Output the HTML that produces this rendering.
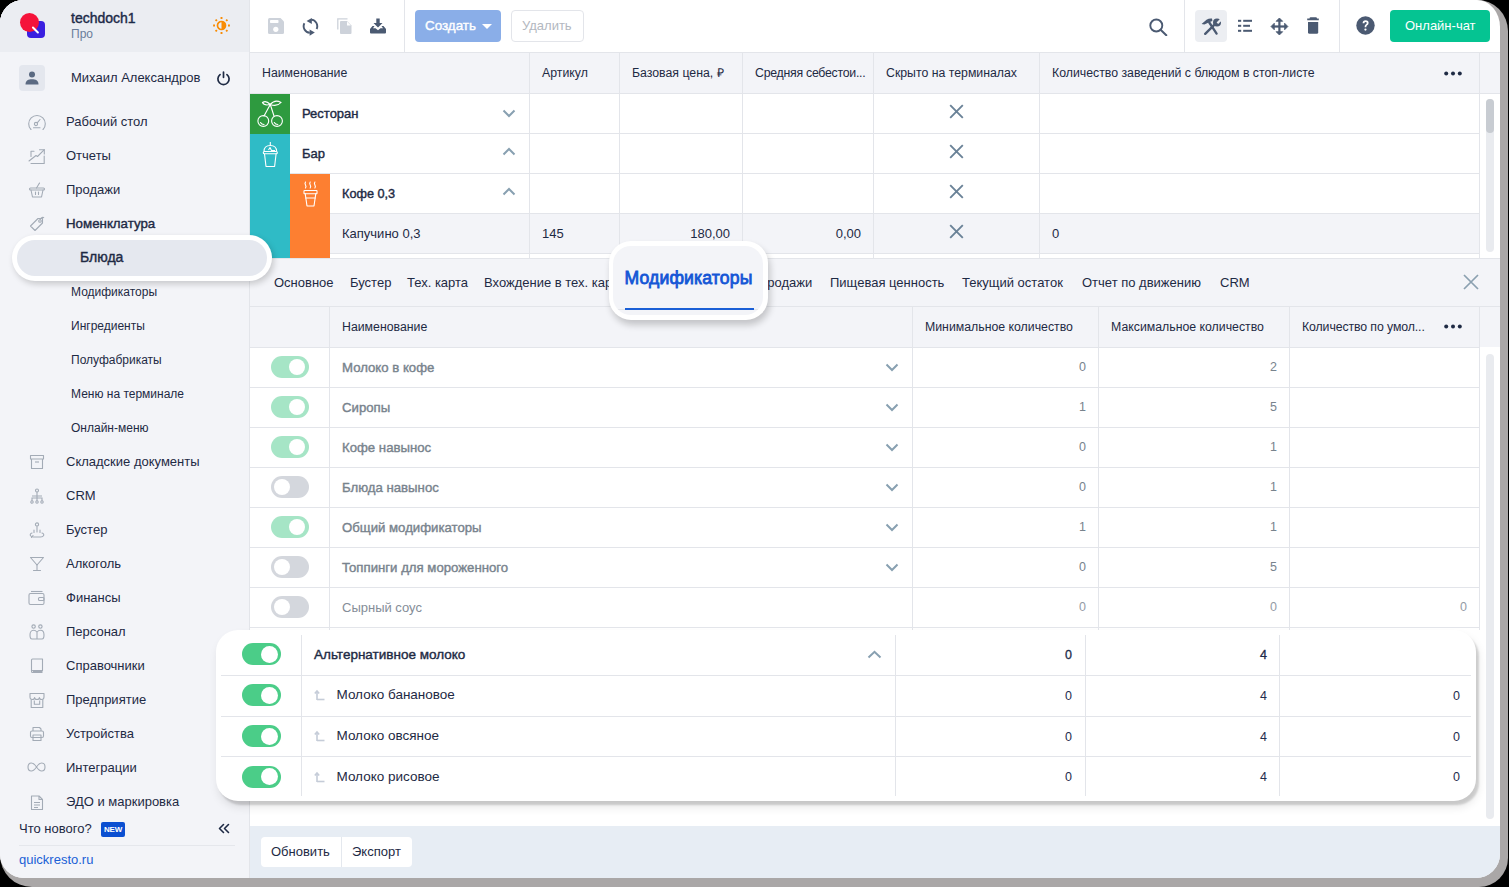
<!DOCTYPE html>
<html><head><meta charset="utf-8">
<style>
*{box-sizing:border-box;margin:0;padding:0}
html,body{width:1509px;height:887px;overflow:hidden;background:#000;font-family:"Liberation Sans",sans-serif;color:#1e2a44}
.abs{position:absolute}
.shadow{position:absolute;left:0;top:0;width:1508px;height:887px;border-radius:24px 31px 29px 32px;background:#aaa7a7}
.app{position:absolute;left:0;top:0;width:1500px;height:878px;border-radius:23px 23px 24px 24px / 23px 27px 24px 24px;overflow:hidden;background:#fff}
.sb{position:absolute;left:0;top:0;width:249px;height:878px;background:#f3f4f8}
.sbh{position:absolute;left:0;top:0;width:249px;height:52px;background:#ebedf2}
.vl{position:absolute;width:1px;background:#e3e5ea}
.hl{position:absolute;height:1px;background:#e3e5ea}
.t{position:absolute;white-space:nowrap;line-height:16px;font-size:13px}
.si{position:absolute;left:0;width:249px;height:34px;display:flex;align-items:center;font-size:13px;white-space:nowrap;color:#1e2a44}
.si svg{position:absolute;left:28px;top:9px}
.si span{position:absolute;left:66px;top:9px;line-height:16px}
.sub span{left:71px}
.m{-webkit-text-stroke-width:0.4px}
</style></head><body>
<div class="shadow"></div>
<div class="app">
  <!-- SIDEBAR -->
  <div class="sb"></div>
  <div class="sbh"></div>
  <div class="vl" style="left:249px;top:0;height:878px"></div>
  <!-- logo -->
  <div class="abs" style="left:27px;top:21px;width:18px;height:17px;border-radius:4px;background:#3a1fe0"></div>
  <div class="abs" style="left:20px;top:13px;width:19px;height:19px;border-radius:50%;background:#f5133a"></div>
  <div class="abs" style="left:30.5px;top:29px;width:9px;height:1.8px;background:#fff;transform:rotate(45deg);border-radius:1px"></div>
  <div class="t m" style="left:71px;top:10px;font-size:14px;color:#1c2a48">techdoch1</div>
  <div class="t" style="left:71px;top:26px;font-size:12px;color:#6a7d9a">Про</div>
  <!-- sun -->
  <svg class="abs" style="left:211.5px;top:16.3px" width="19" height="19" viewBox="0 0 19 19"><g stroke="#f88c05" stroke-width="1.9"><line x1="16.00" y1="9.50" x2="17.90" y2="9.50"/><line x1="14.10" y1="14.10" x2="15.44" y2="15.44"/><line x1="9.50" y1="16.00" x2="9.50" y2="17.90"/><line x1="4.90" y1="14.10" x2="3.56" y2="15.44"/><line x1="3.00" y1="9.50" x2="1.10" y2="9.50"/><line x1="4.90" y1="4.90" x2="3.56" y2="3.56"/><line x1="9.50" y1="3.00" x2="9.50" y2="1.10"/><line x1="14.10" y1="4.90" x2="15.44" y2="3.56"/></g><circle cx="9.5" cy="9.5" r="4.0" fill="none" stroke="#f88c05" stroke-width="1.7"/><path d="M9.5 5.5 A4 4 0 0 1 9.5 13.5 Z" fill="#f88c05"/></svg>
  <!-- user -->
  <div class="abs" style="left:19px;top:65px;width:26px;height:26px;border-radius:4px;background:#e4e7ee"></div>
  <svg class="abs" style="left:25px;top:71px" width="14" height="14" viewBox="0 0 14 14">
    <circle cx="7" cy="3.6" r="3" fill="#5b6a82"/>
    <path d="M0.5 13.5 C0.5 9.5 3.5 8.3 7 8.3 C10.5 8.3 13.5 9.5 13.5 13.5 Z" fill="#5b6a82"/>
  </svg>
  <div class="t" style="left:71px;top:70px">Михаил Александров</div>
  <svg class="abs" style="left:216px;top:70.5px" width="15" height="15" viewBox="0 0 15 15"><path d="M10.95 3.59 A5.6 5.6 0 1 1 4.05 3.59" fill="none" stroke="#1e2a44" stroke-width="1.7" stroke-linecap="round"/><line x1="7.5" y1="1" x2="7.5" y2="6.3" stroke="#1e2a44" stroke-width="1.7" stroke-linecap="round"/></svg>
  <div class="t" style="left:66px;top:114px">Рабочий стол</div>
  <svg class="abs" style="left:27px;top:114px" width="20" height="17" viewBox="0 0 20 17"><g fill="none" stroke="#a3abb6" stroke-width="1.1" stroke-linecap="round"><path d="M4 15.5 A8.3 8.3 0 1 1 16 15.5"/><circle cx="9" cy="10" r="1.6"/><line x1="10.2" y1="8.8" x2="13" y2="5.5"/><line x1="6.5" y1="13.8" x2="13" y2="13.8"/></g></svg>
  <div class="t" style="left:66px;top:148px">Отчеты</div>
  <svg class="abs" style="left:28px;top:148px" width="18" height="17" viewBox="0 0 18 17"><g fill="none" stroke="#a3abb6" stroke-width="1.1" stroke-linecap="round" stroke-linejoin="round"><path d="M3 8.5 V3.3 H6"/><path d="M3 15.5 H16.2 V8"/><path d="M1 13 L8 7.5 L9.5 8.5 L16.3 1.7"/><path d="M11.5 1.7 H16.3 V6"/></g></svg>
  <div class="t" style="left:66px;top:182px">Продажи</div>
  <svg class="abs" style="left:28px;top:182px" width="18" height="17" viewBox="0 0 18 17"><g fill="none" stroke="#a3abb6" stroke-width="1.1" stroke-linecap="round" stroke-linejoin="round"><rect x="1.5" y="6" width="15" height="2" rx="1"/><path d="M3 8 L4.5 15 H13.5 L15 8"/><path d="M7.5 10 V12.5 M10.5 10 V12.5"/><path d="M8.5 6 L11.5 1"/></g></svg>
  <div class="t m" style="left:66px;top:216px;font-size:13.3px">Номенклатура</div>
  <svg class="abs" style="left:29px;top:216px" width="16" height="16" viewBox="0 0 16 16"><g fill="none" stroke="#a3abb6" stroke-width="1.1" stroke-linejoin="round"><path d="M1.5 10 L9 2.5 H13.5 V7 L6 14.5 Z"/><circle cx="11" cy="5" r="1.3"/><path d="M11 3.7 C12 1.5 14 0.8 15 2"/></g></svg>
  <div class="t" style="left:71px;top:284px;font-size:12px">Модификаторы</div>
  <div class="t" style="left:71px;top:318px;font-size:12px">Ингредиенты</div>
  <div class="t" style="left:71px;top:352px;font-size:12px">Полуфабрикаты</div>
  <div class="t" style="left:71px;top:386px;font-size:12px">Меню на терминале</div>
  <div class="t" style="left:71px;top:420px;font-size:12px">Онлайн-меню</div>
  <div class="t" style="left:66px;top:454px">Складские документы</div>
  <svg class="abs" style="left:29px;top:454px" width="16" height="16" viewBox="0 0 16 16"><g fill="none" stroke="#a3abb6" stroke-width="1.1" stroke-linejoin="round"><rect x="1.5" y="1.5" width="13" height="3.5"/><path d="M2.5 5 V14.5 H13.5 V5"/><path d="M6 8 H10"/></g></svg>
  <div class="t" style="left:66px;top:488px">CRM</div>
  <svg class="abs" style="left:29px;top:488px" width="16" height="16" viewBox="0 0 16 16"><g fill="none" stroke="#a3abb6" stroke-width="1.1"><circle cx="8" cy="2.5" r="1.5"/><path d="M8 4 V8 M3 13 V10 H13 V13 M8 8 V13 M3 8 H13"/><circle cx="3" cy="14" r="1.2"/><circle cx="8" cy="14" r="1.2"/><circle cx="13" cy="14" r="1.2"/></g></svg>
  <div class="t" style="left:66px;top:522px">Бустер</div>
  <svg class="abs" style="left:29px;top:522px" width="16" height="17" viewBox="0 0 16 17"><g fill="none" stroke="#a3abb6" stroke-width="1.1" stroke-linecap="round"><circle cx="8" cy="2.5" r="1.6"/><path d="M8 5 V10 M5 8 V10.5 M11 8 V10.5"/><path d="M3 11 C0 12 1 15 4.5 15 H11.5 C15 15 16 12 13 11"/><path d="M4 13.5 L2.5 15.5"/></g></svg>
  <div class="t" style="left:66px;top:556px">Алкоголь</div>
  <svg class="abs" style="left:29px;top:556px" width="16" height="16" viewBox="0 0 16 16"><g fill="none" stroke="#a3abb6" stroke-width="1.1" stroke-linecap="round" stroke-linejoin="round"><path d="M1.5 1.5 H14.5 L8 9 Z"/><path d="M8 9 V14.5 M4.5 14.5 H11.5"/></g></svg>
  <div class="t" style="left:66px;top:590px">Финансы</div>
  <svg class="abs" style="left:28px;top:590px" width="17" height="16" viewBox="0 0 17 16"><g fill="none" stroke="#a3abb6" stroke-width="1.1" stroke-linejoin="round"><path d="M3 1.5 H14.5"/><rect x="1" y="3.5" width="15" height="11" rx="1.5"/><rect x="10.5" y="7.5" width="5.5" height="3" rx="1"/></g></svg>
  <div class="t" style="left:66px;top:624px">Персонал</div>
  <svg class="abs" style="left:29px;top:624px" width="16" height="16" viewBox="0 0 16 16"><g fill="none" stroke="#a3abb6" stroke-width="1.1"><circle cx="4.6" cy="2.6" r="1.7"/><circle cx="11.4" cy="2.6" r="1.7"/><path d="M7.8 8 C7 6.8 6 6.3 4.5 6.3 C2 6.3 1 8.5 1 11 C1 13 1.6 15 3 15 H13 C14.4 15 15 13 15 11 C15 8.5 14 6.3 11.5 6.3 C10 6.3 9 6.8 8.2 8"/><path d="M8 8 V15"/></g></svg>
  <div class="t" style="left:66px;top:658px">Справочники</div>
  <svg class="abs" style="left:30px;top:658px" width="14" height="16" viewBox="0 0 14 16"><g fill="none" stroke="#a3abb6" stroke-width="1.1" stroke-linejoin="round"><path d="M1.5 13 V2 Q1.5 1 2.5 1 H12.5 V12.5 H2.5 Q1.5 12.5 1.5 13.5 Q1.5 14.5 2.5 14.5 H12.5"/><path d="M3 13.5 H12.5"/></g></svg>
  <div class="t" style="left:66px;top:692px">Предприятие</div>
  <svg class="abs" style="left:29px;top:692px" width="16" height="17" viewBox="0 0 16 17"><g fill="none" stroke="#a3abb6" stroke-width="1.1" stroke-linejoin="round"><path d="M1 1.5 H15 V5 Q15 7.5 12.7 7.5 Q10.4 7.5 10.4 5.5 Q10.4 7.5 8 7.5 Q5.6 7.5 5.6 5.5 Q5.6 7.5 3.3 7.5 Q1 7.5 1 5 Z"/><path d="M2.2 7.5 V15.5 H13.8 V7.5"/><path d="M5.3 8.5 V12.3 H10.7 V8.5"/></g></svg>
  <div class="t" style="left:66px;top:726px">Устройства</div>
  <svg class="abs" style="left:29px;top:726px" width="16" height="16" viewBox="0 0 16 16"><g fill="none" stroke="#a3abb6" stroke-width="1.1" stroke-linejoin="round"><path d="M4 5 V1.5 H10.5 L12 3 V5"/><rect x="1.5" y="5" width="13" height="6.5" rx="1.5"/><rect x="4" y="9" width="8" height="5.5"/></g></svg>
  <div class="t" style="left:66px;top:760px">Интеграции</div>
  <svg class="abs" style="left:27px;top:762px" width="19" height="10" viewBox="0 0 19 10"><path d="M9.5 5 C7.5 2 6 1 4.3 1 C2.2 1 1 2.8 1 5 C1 7.2 2.2 9 4.3 9 C6 9 7.5 8 9.5 5 C11.5 2 13 1 14.7 1 C16.8 1 18 2.8 18 5 C18 7.2 16.8 9 14.7 9 C13 9 11.5 8 9.5 5 Z" fill="none" stroke="#a3abb6" stroke-width="1.1"/></svg>
  <div class="t" style="left:66px;top:794px">ЭДО и маркировка</div>
  <svg class="abs" style="left:30px;top:795px" width="14" height="16" viewBox="0 0 14 16"><g fill="none" stroke="#a3abb6" stroke-width="1.1" stroke-linejoin="round"><path d="M1.5 1 H9 L12.5 4.5 V14.5 H1.5 Z"/><path d="M9 1 V4.5 H12.5"/><path d="M4 7.5 H10 M4 10 H10 M4 12.5 H8"/></g></svg>
  <div class="t" style="left:19px;top:821px;font-size:13px">Что нового?</div>
  <div class="abs" style="left:101px;top:822px;width:24px;height:15px;border-radius:2px;background:#0b4fd1;color:#fff;font-size:8px;font-weight:700;line-height:15px;text-align:center;letter-spacing:-0.2px">NEW</div>
  <svg class="abs" style="left:218px;top:823px" width="12" height="11" viewBox="0 0 12 11"><g fill="none" stroke="#1e2a44" stroke-width="1.6" stroke-linecap="round" stroke-linejoin="round"><path d="M5.5 1.5 L1.5 5.5 L5.5 9.5"/><path d="M10.5 1.5 L6.5 5.5 L10.5 9.5"/></g></svg>
  <div class="hl" style="left:19px;top:845px;width:216px;background:#e5e7ec"></div>
  <div class="t" style="left:19px;top:852px;font-size:13px;color:#1a5fd6">quickresto.ru</div>

  <!-- TOOLBAR -->
  <div class="hl" style="left:250px;top:52px;width:1250px"></div>

  <div class="vl" style="left:404px;top:0;height:52px"></div>
  <svg class="abs" style="left:268px;top:18px" width="16" height="16" viewBox="0 0 16 16"><path d="M1.5 0 H12.5 L16 3.5 V14.5 Q16 16 14.5 16 H1.5 Q0 16 0 14.5 V1.5 Q0 0 1.5 0 Z" fill="#cdd2da"/><rect x="2" y="2" width="8.5" height="3" rx="0.8" fill="#fff"/><circle cx="7.8" cy="11.3" r="2.6" fill="#fff"/></svg>
  <svg class="abs" style="left:302px;top:17px" width="17" height="20" viewBox="0 0 17 20"><g fill="none" stroke="#4b5a72" stroke-width="1.9"><path d="M9.2 2.6 A6.6 6.6 0 0 1 14.6 12"/><path d="M2.4 6.2 A6.6 6.6 0 0 0 7.8 15.8"/></g><g fill="#4b5a72"><path d="M4.6 4 L9.8 0.9 L9.8 7.1 Z"/><path d="M12.8 15.6 L7.6 12.5 L7.6 18.7 Z"/></g></svg>
  <svg class="abs" style="left:337px;top:18px" width="15" height="16" viewBox="0 0 15 16"><path d="M0.8 11.5 V0.8 H10.5" fill="none" stroke="#cdd2da" stroke-width="1.3"/><path d="M4 3 H10 L14.5 7.5 V15 Q14.5 16 13.5 16 H4 Q3 16 3 15 V4 Q3 3 4 3 Z" fill="#cdd2da"/><path d="M10 3.6 L13.9 7.5 H10 Z" fill="#fff"/></svg>
  <svg class="abs" style="left:370px;top:18px" width="16" height="16" viewBox="0 0 16 16"><path d="M6.3 0.5 H9.7 V5 H12.5 L8 9.5 L3.5 5 H6.3 Z" fill="#4b5a72"/><path d="M0 11 L2.5 8 H4.5 L3 10.3 H5.5 L8 12.3 L10.5 10.3 H13 L11.5 8 H13.5 L16 11 V14.5 Q16 15.5 15 15.5 H1 Q0 15.5 0 14.5 Z" fill="#4b5a72"/></svg>
  <div class="abs" style="left:415px;top:10px;width:86px;height:32px;border-radius:4px;background:#8aaee8"></div>
  <div class="t m" style="left:425px;top:18px;font-size:13.4px;color:#fff">Создать</div>
  <svg class="abs" style="left:482px;top:24px" width="10" height="5" viewBox="0 0 10 5"><path d="M0 0 H10 L5 5 Z" fill="#fff"/></svg>
  <div class="abs" style="left:511px;top:10px;width:73px;height:32px;border-radius:4px;background:#fff;border:1px solid #e3e5ea"></div>
  <div class="t" style="left:522px;top:18px;font-size:13px;color:#b3b8c0">Удалить</div>
  <svg class="abs" style="left:1149px;top:18px" width="19" height="18" viewBox="0 0 19 18"><circle cx="7.3" cy="7.5" r="6" fill="none" stroke="#4b5a72" stroke-width="1.9"/><path d="M11.6 11.8 L17.3 17.3" stroke="#4b5a72" stroke-width="2" stroke-linecap="round"/></svg>
  <div class="vl" style="left:1184px;top:0;height:52px"></div>
  <div class="abs" style="left:1195px;top:10px;width:32px;height:32px;border-radius:4px;background:#eceef2"></div>
  <svg class="abs" style="left:1201px;top:18px" width="21" height="18" viewBox="0 0 21 18"><g stroke="#4b5a72" stroke-linecap="round"><path d="M8.3 4.5 L15.6 15.6" stroke-width="2.3"/><path d="M4.2 15.8 L13 7.2" stroke-width="2.4"/></g><path d="M0.6 6 L5.5 1.8 Q8 0.1 11 0.5 L11.4 2.9 L8.8 3.9 L3.4 6.6 Z" fill="#4b5a72"/><circle cx="16" cy="4.6" r="4" fill="#4b5a72"/><path d="M15.6 4.4 L19.4 0.4 L21 2.2 L17.2 6.1 Z" fill="#eceef2"/></svg>
  <svg class="abs" style="left:1238px;top:19px" width="15" height="14" viewBox="0 0 15 14"><g fill="#4b5a72"><rect x="0" y="0.8" width="3.2" height="2"/><rect x="5.2" y="0.8" width="8.8" height="2"/><rect x="0" y="5.8" width="3.2" height="2"/><rect x="5.2" y="5.8" width="6.8" height="2"/><rect x="0" y="10.8" width="3.2" height="2"/><rect x="5.2" y="10.8" width="8.8" height="2"/></g></svg>
  <svg class="abs" style="left:1270px;top:17px" width="19" height="19" viewBox="0 0 19 19"><g fill="#4b5a72" stroke="#4b5a72" stroke-width="0.8" stroke-linejoin="round"><rect x="3" y="8.4" width="13" height="2.2" stroke="none"/><rect x="8.3" y="3" width="2.2" height="13" stroke="none"/><path d="M9.4 1 L12.7 4.3 H6.1 Z"/><path d="M9.4 18 L12.7 14.7 H6.1 Z"/><path d="M1 9.5 L4.3 6.2 V12.8 Z"/><path d="M17.9 9.5 L14.6 6.2 V12.8 Z"/></g></svg>
  <svg class="abs" style="left:1306px;top:17px" width="14" height="18" viewBox="0 0 14 18"><g fill="#4b5a72"><path d="M3.8 0.6 Q4 0.2 4.6 0.2 H9.9 Q10.5 0.2 10.7 0.6 L11 1.5 H12.8 V3.3 H1.2 V1.5 H3.5 Z"/><path d="M2 4.9 H12.2 V15.2 Q12.2 16.7 10.7 16.7 H3.5 Q2 16.7 2 15.2 Z"/></g></svg>
  <div class="vl" style="left:1339px;top:0;height:52px"></div>
  <svg class="abs" style="left:1356px;top:16px" width="19" height="19" viewBox="0 0 19 19"><circle cx="9.5" cy="9.5" r="9.2" fill="#4b5a72"/><path d="M6.6 7.3 Q6.6 4.3 9.6 4.3 Q12.6 4.3 12.6 7 Q12.6 8.6 10.9 9.6 Q10.3 10 10.3 11.3 H8.6 Q8.6 9.4 9.7 8.6 Q10.8 7.9 10.8 7 Q10.8 6 9.6 6 Q8.4 6 8.4 7.3 Z" fill="#fff"/><circle cx="9.45" cy="13.6" r="1.15" fill="#fff"/></svg>
  <div class="abs" style="left:1390px;top:10px;width:100px;height:32px;border-radius:4px;background:#05c492"></div>
  <div class="t" style="left:1405px;top:18px;font-size:13px;color:#fff">Онлайн-чат</div>
  <!-- UPPER TABLE -->

  <div class="abs" style="left:250px;top:53px;width:1250px;height:40px;background:#f3f4f8"></div>
  <div class="hl" style="left:250px;top:93px;width:1250px"></div>
  <div class="t" style="left:262px;top:65px;font-size:12.3px">Наименование</div>
  <div class="t" style="left:542px;top:65px;font-size:12.3px">Артикул</div>
  <div class="t" style="left:632px;top:65px;font-size:12.3px">Базовая цена, ₽</div>
  <div class="t" style="left:755px;top:65px;font-size:12.3px;letter-spacing:-0.25px">Средняя себестои...</div>
  <div class="t" style="left:886px;top:65px;font-size:12.3px">Скрыто на терминалах</div>
  <div class="t" style="left:1052px;top:65px;font-size:12.3px">Количество заведений с блюдом в стоп-листе</div>
  <svg class="abs" style="left:1444px;top:71px" width="18" height="5" viewBox="0 0 18 5"><g fill="#1e2a44"><circle cx="2.2" cy="2.5" r="2"/><circle cx="9" cy="2.5" r="2"/><circle cx="15.8" cy="2.5" r="2"/></g></svg>
  <!-- rows -->
  <div class="abs" style="left:330px;top:214px;width:1149px;height:39px;background:#f3f4f8"></div>
  <div class="hl" style="left:290px;top:133px;width:1189px"></div>
  <div class="hl" style="left:290px;top:173px;width:1189px"></div>
  <div class="hl" style="left:330px;top:213px;width:1149px"></div>
  <div class="hl" style="left:330px;top:253px;width:1149px"></div>
  <div class="vl" style="left:529px;top:53px;height:205px"></div>
  <div class="vl" style="left:619px;top:53px;height:205px"></div>
  <div class="vl" style="left:742px;top:53px;height:205px"></div>
  <div class="vl" style="left:873px;top:53px;height:205px"></div>
  <div class="vl" style="left:1039px;top:53px;height:205px"></div>
  <div class="vl" style="left:1479px;top:53px;height:205px"></div>
  <div class="abs" style="left:250px;top:94px;width:40px;height:40px;background:#2e9a3f"></div>
  <div class="abs" style="left:250px;top:134px;width:40px;height:124px;background:#2fbbc6"></div>
  <div class="abs" style="left:290px;top:174px;width:40px;height:84px;background:#fd7f31"></div>
  <svg class="abs" style="left:250px;top:94px" width="40" height="40" viewBox="0 0 40 40"><g fill="none" stroke="#fff" stroke-width="1.1" stroke-linecap="round"><circle cx="13.3" cy="27" r="5.4"/><circle cx="27" cy="27" r="5.4"/><path d="M10.5 28.5 Q11.5 30.5 14 30.5"/><path d="M24.3 28.5 Q25.3 30.5 27.8 30.5"/><path d="M14 22 L20.3 10.5 L24 22"/><path d="M20.3 10.5 Q16 6 12.5 8.5 Q14 12 20.3 10.5 Q25 5 31 8.5 Q27 13 20.3 10.5"/></g></svg>
  <svg class="abs" style="left:250px;top:134px" width="40" height="40" viewBox="0 0 40 40"><g fill="none" stroke="#fff" stroke-width="1.1" stroke-linejoin="round"><path d="M14 17.5 Q14 11.5 20.3 11.5 Q26.6 11.5 26.6 17.5"/><path d="M20.3 8 V11.5"/><path d="M18.5 16 L20 13.5 L21.5 16.5 H25"/><rect x="13.3" y="17.5" width="14" height="2.2" rx="1"/><path d="M14.5 19.7 L16 32.5 H24.6 L26.1 19.7"/></g></svg>
  <svg class="abs" style="left:290px;top:174px" width="40" height="40" viewBox="0 0 40 40"><g fill="none" stroke="#fff" stroke-width="1.1" stroke-linejoin="round" stroke-linecap="round"><path d="M15.5 8 Q14.5 9.5 15.5 11 Q16.5 12.5 15.5 14"/><path d="M20.2 8 Q19.2 9.5 20.2 11 Q21.2 12.5 20.2 14"/><path d="M24.9 8 Q23.9 9.5 24.9 11 Q25.9 12.5 24.9 14"/><rect x="14" y="16.5" width="13" height="3.2" rx="0.5"/><path d="M15.2 19.7 L17 32 H24 L25.8 19.7"/><path d="M15.8 24 H25.2"/></g></svg>
  <div class="t m" style="left:302px;top:106px;font-size:13px">Ресторан</div>
  <div class="t m" style="left:302px;top:146px;font-size:13px">Бар</div>
  <div class="t m" style="left:342px;top:186px;font-size:12.7px">Кофе 0,3</div>
  <div class="t" style="left:342px;top:226px;font-size:13px">Капучино 0,3</div>
  <div class="t" style="left:542px;top:226px;font-size:13px">145</div>
  <div class="t" style="left:630px;top:226px;font-size:13px;width:100px;text-align:right">180,00</div>
  <div class="t" style="left:761px;top:226px;font-size:13px;width:100px;text-align:right">0,00</div>
  <div class="t" style="left:1052px;top:226px;font-size:13px">0</div>
  <svg class="abs" style="left:502px;top:109px" width="14" height="9" viewBox="0 0 14 9"><path d="M1.5 1.5 L7 7 L12.5 1.5" fill="none" stroke="#88a0b1" stroke-width="2"/></svg>
  <svg class="abs" style="left:502px;top:147px" width="14" height="9" viewBox="0 0 14 9"><path d="M1.5 7.5 L7 2 L12.5 7.5" fill="none" stroke="#88a0b1" stroke-width="2"/></svg>
  <svg class="abs" style="left:502px;top:187px" width="14" height="9" viewBox="0 0 14 9"><path d="M1.5 7.5 L7 2 L12.5 7.5" fill="none" stroke="#88a0b1" stroke-width="2"/></svg>
  <svg class="abs" style="left:949px;top:104px" width="15" height="15" viewBox="0 0 15 15"><path d="M1.2 1.2 L13.8 13.8 M13.8 1.2 L1.2 13.8" stroke="#6a8297" stroke-width="1.9"/></svg>
  <svg class="abs" style="left:949px;top:144px" width="15" height="15" viewBox="0 0 15 15"><path d="M1.2 1.2 L13.8 13.8 M13.8 1.2 L1.2 13.8" stroke="#6a8297" stroke-width="1.9"/></svg>
  <svg class="abs" style="left:949px;top:184px" width="15" height="15" viewBox="0 0 15 15"><path d="M1.2 1.2 L13.8 13.8 M13.8 1.2 L1.2 13.8" stroke="#6a8297" stroke-width="1.9"/></svg>
  <svg class="abs" style="left:949px;top:224px" width="15" height="15" viewBox="0 0 15 15"><path d="M1.2 1.2 L13.8 13.8 M13.8 1.2 L1.2 13.8" stroke="#6a8297" stroke-width="1.9"/></svg>
  <div class="abs" style="left:1486px;top:99px;width:8px;height:153px;border-radius:4px;background:#e9ebef"></div>
  <div class="abs" style="left:1486px;top:99px;width:8px;height:34px;border-radius:4px;background:#c8ccd2"></div>
  <!-- LOWER -->
  <div class="hl" style="left:250px;top:258px;width:1250px"></div>
  <div class="abs" style="left:250px;top:259px;width:1250px;height:47px;background:#f3f4f8"></div>
  <div class="hl" style="left:250px;top:306px;width:1250px"></div>
  <div class="t" style="left:274px;top:275px">Основное</div>
  <div class="t" style="left:350px;top:275px">Бустер</div>
  <div class="t" style="left:407px;top:275px">Тех. карта</div>
  <div class="t" style="left:484px;top:275px">Вхождение в тех. карты</div>
  <div class="t" style="left:643px;top:275px">Модификаторы</div>
  <div class="t" style="left:758px;top:275px">Продажи</div>
  <div class="t" style="left:830px;top:275px">Пищевая ценность</div>
  <div class="t" style="left:962px;top:275px">Текущий остаток</div>
  <div class="t" style="left:1082px;top:275px">Отчет по движению</div>
  <div class="t" style="left:1220px;top:275px">CRM</div>
  <svg class="abs" style="left:1463px;top:274px" width="16" height="16" viewBox="0 0 16 16"><path d="M1 1 L15 15 M15 1 L1 15" stroke="#8ba0b0" stroke-width="1.7"/></svg>
  <div class="abs" style="left:250px;top:307px;width:1250px;height:40px;background:#f3f4f8"></div>
  <div class="hl" style="left:250px;top:347px;width:1229px"></div>
  <div class="t" style="left:342px;top:319px;font-size:12.3px">Наименование</div>
  <div class="t" style="left:925px;top:319px;font-size:12.3px">Минимальное количество</div>
  <div class="t" style="left:1111px;top:319px;font-size:12.3px">Максимальное количество</div>
  <div class="t" style="left:1302px;top:319px;font-size:12.3px;letter-spacing:-0.1px">Количество по умол...</div>
  <svg class="abs" style="left:1444px;top:324px" width="18" height="5" viewBox="0 0 18 5"><g fill="#1e2a44"><circle cx="2.2" cy="2.5" r="2"/><circle cx="9" cy="2.5" r="2"/><circle cx="15.8" cy="2.5" r="2"/></g></svg>
  <div class="vl" style="left:329px;top:307px;height:323px"></div>
  <div class="vl" style="left:912px;top:307px;height:323px"></div>
  <div class="vl" style="left:1098px;top:307px;height:323px"></div>
  <div class="vl" style="left:1289px;top:307px;height:323px"></div>
  <div class="vl" style="left:1479px;top:307px;height:323px"></div>
  <div class="hl" style="left:250px;top:387px;width:1229px"></div>
  <div class="abs" style="left:271px;top:356px;width:38px;height:22px;border-radius:11px;background:#a6e5c6"></div>
  <div class="abs" style="left:289px;top:359px;width:16px;height:16px;border-radius:50%;background:#fff"></div>
  <div class="t m" style="left:342px;top:360px;font-size:13.2px;color:#78838d">Молоко в кофе</div>
  <svg class="abs" style="left:885px;top:363px" width="14" height="9" viewBox="0 0 14 9"><path d="M1.5 1.5 L7 7 L12.5 1.5" fill="none" stroke="#88a0b1" stroke-width="2"/></svg>
  <div class="t" style="left:986px;top:359px;font-size:12.5px;width:100px;text-align:right;color:#78838d">0</div>
  <div class="t" style="left:1177px;top:359px;font-size:12.5px;width:100px;text-align:right;color:#78838d">2</div>
  <div class="hl" style="left:250px;top:427px;width:1229px"></div>
  <div class="abs" style="left:271px;top:396px;width:38px;height:22px;border-radius:11px;background:#a6e5c6"></div>
  <div class="abs" style="left:289px;top:399px;width:16px;height:16px;border-radius:50%;background:#fff"></div>
  <div class="t m" style="left:342px;top:400px;font-size:13.2px;color:#78838d">Сиропы</div>
  <svg class="abs" style="left:885px;top:403px" width="14" height="9" viewBox="0 0 14 9"><path d="M1.5 1.5 L7 7 L12.5 1.5" fill="none" stroke="#88a0b1" stroke-width="2"/></svg>
  <div class="t" style="left:986px;top:399px;font-size:12.5px;width:100px;text-align:right;color:#78838d">1</div>
  <div class="t" style="left:1177px;top:399px;font-size:12.5px;width:100px;text-align:right;color:#78838d">5</div>
  <div class="hl" style="left:250px;top:467px;width:1229px"></div>
  <div class="abs" style="left:271px;top:436px;width:38px;height:22px;border-radius:11px;background:#a6e5c6"></div>
  <div class="abs" style="left:289px;top:439px;width:16px;height:16px;border-radius:50%;background:#fff"></div>
  <div class="t m" style="left:342px;top:440px;font-size:13.2px;color:#78838d">Кофе навынос</div>
  <svg class="abs" style="left:885px;top:443px" width="14" height="9" viewBox="0 0 14 9"><path d="M1.5 1.5 L7 7 L12.5 1.5" fill="none" stroke="#88a0b1" stroke-width="2"/></svg>
  <div class="t" style="left:986px;top:439px;font-size:12.5px;width:100px;text-align:right;color:#78838d">0</div>
  <div class="t" style="left:1177px;top:439px;font-size:12.5px;width:100px;text-align:right;color:#78838d">1</div>
  <div class="hl" style="left:250px;top:507px;width:1229px"></div>
  <div class="abs" style="left:271px;top:476px;width:38px;height:22px;border-radius:11px;background:#d4d7dd"></div>
  <div class="abs" style="left:274px;top:479px;width:16px;height:16px;border-radius:50%;background:#fff"></div>
  <div class="t m" style="left:342px;top:480px;font-size:13.2px;color:#78838d">Блюда навынос</div>
  <svg class="abs" style="left:885px;top:483px" width="14" height="9" viewBox="0 0 14 9"><path d="M1.5 1.5 L7 7 L12.5 1.5" fill="none" stroke="#88a0b1" stroke-width="2"/></svg>
  <div class="t" style="left:986px;top:479px;font-size:12.5px;width:100px;text-align:right;color:#78838d">0</div>
  <div class="t" style="left:1177px;top:479px;font-size:12.5px;width:100px;text-align:right;color:#78838d">1</div>
  <div class="hl" style="left:250px;top:547px;width:1229px"></div>
  <div class="abs" style="left:271px;top:516px;width:38px;height:22px;border-radius:11px;background:#a6e5c6"></div>
  <div class="abs" style="left:289px;top:519px;width:16px;height:16px;border-radius:50%;background:#fff"></div>
  <div class="t m" style="left:342px;top:520px;font-size:13.2px;color:#78838d">Общий модификаторы</div>
  <svg class="abs" style="left:885px;top:523px" width="14" height="9" viewBox="0 0 14 9"><path d="M1.5 1.5 L7 7 L12.5 1.5" fill="none" stroke="#88a0b1" stroke-width="2"/></svg>
  <div class="t" style="left:986px;top:519px;font-size:12.5px;width:100px;text-align:right;color:#78838d">1</div>
  <div class="t" style="left:1177px;top:519px;font-size:12.5px;width:100px;text-align:right;color:#78838d">1</div>
  <div class="hl" style="left:250px;top:587px;width:1229px"></div>
  <div class="abs" style="left:271px;top:556px;width:38px;height:22px;border-radius:11px;background:#d4d7dd"></div>
  <div class="abs" style="left:274px;top:559px;width:16px;height:16px;border-radius:50%;background:#fff"></div>
  <div class="t m" style="left:342px;top:560px;font-size:13.2px;color:#78838d">Топпинги для мороженного</div>
  <svg class="abs" style="left:885px;top:563px" width="14" height="9" viewBox="0 0 14 9"><path d="M1.5 1.5 L7 7 L12.5 1.5" fill="none" stroke="#88a0b1" stroke-width="2"/></svg>
  <div class="t" style="left:986px;top:559px;font-size:12.5px;width:100px;text-align:right;color:#78838d">0</div>
  <div class="t" style="left:1177px;top:559px;font-size:12.5px;width:100px;text-align:right;color:#78838d">5</div>
  <div class="hl" style="left:250px;top:627px;width:1229px"></div>
  <div class="abs" style="left:271px;top:596px;width:38px;height:22px;border-radius:11px;background:#d4d7dd"></div>
  <div class="abs" style="left:274px;top:599px;width:16px;height:16px;border-radius:50%;background:#fff"></div>
  <div class="t" style="left:342px;top:600px;font-size:13px;color:#858d98">Сырный соус</div>
  <div class="t" style="left:986px;top:599px;font-size:12.5px;width:100px;text-align:right;color:#949ba5">0</div>
  <div class="t" style="left:1177px;top:599px;font-size:12.5px;width:100px;text-align:right;color:#949ba5">0</div>
  <div class="t" style="left:1367px;top:599px;font-size:12.5px;width:100px;text-align:right;color:#949ba5">0</div>
  <div class="abs" style="left:1486px;top:354px;width:8px;height:465px;border-radius:4px;background:#e9ebef"></div>
  <div class="abs" style="left:250px;top:826px;width:1250px;height:52px;background:#e7edf4"></div>
  <div class="abs" style="left:261px;top:837px;width:151px;height:30px;border-radius:4px;background:#fff"></div>
  <div class="vl" style="left:341px;top:837px;height:30px;background:#e4e8ee"></div>
  <div class="t" style="left:271px;top:844px">Обновить</div>
  <div class="t" style="left:352px;top:844px">Экспорт</div>
  <div class="abs" style="left:216px;top:630px;width:1260px;height:171px;border-radius:22px;background:#fff;box-shadow:3px 4px 2px rgba(0,0,0,0.14),2px 6px 10px rgba(0,0,0,0.1)"></div>
  <div class="vl" style="left:301px;top:635px;height:161px"></div>
  <div class="vl" style="left:895px;top:635px;height:161px"></div>
  <div class="vl" style="left:1085px;top:635px;height:161px"></div>
  <div class="vl" style="left:1279px;top:635px;height:161px"></div>
  <div class="hl" style="left:221px;top:675px;width:1250px"></div>
  <div class="hl" style="left:221px;top:716px;width:1250px"></div>
  <div class="hl" style="left:221px;top:756px;width:1250px"></div>
  <div class="abs" style="left:242px;top:643px;width:39px;height:22px;border-radius:11px;background:#4bcd88"></div>
  <div class="abs" style="left:261px;top:645.5px;width:17px;height:17px;border-radius:50%;background:#fff"></div>
  <div class="t m" style="left:314px;top:646.5px;font-size:13.5px">Альтернативное молоко</div>
  <svg class="abs" style="left:867px;top:649.5px" width="15" height="9" viewBox="0 0 15 9"><path d="M1.5 7.5 L7.5 1.8 L13.5 7.5" fill="none" stroke="#88a0b1" stroke-width="2"/></svg>
  <div class="t" style="left:972px;top:646.5px;font-size:12.5px;-webkit-text-stroke-width:0.3px;color:#1c2a4a;width:100px;text-align:right">0</div>
  <div class="t" style="left:1167px;top:646.5px;font-size:12.5px;-webkit-text-stroke-width:0.3px;color:#1c2a4a;width:100px;text-align:right">4</div>
  <div class="abs" style="left:242px;top:684px;width:39px;height:22px;border-radius:11px;background:#4bcd88"></div>
  <div class="abs" style="left:261px;top:686.5px;width:17px;height:17px;border-radius:50%;background:#fff"></div>
  <svg class="abs" style="left:314px;top:689px" width="11" height="12" viewBox="0 0 11 12"><g fill="none" stroke="#c5ccd8" stroke-width="1.6"><path d="M3 11 V2.5"/><path d="M0.8 4.5 L3 2 L5.2 4.5"/><path d="M3 10.5 H10.5"/></g></svg>
  <div class="t" style="left:336.5px;top:687px;font-size:13.5px">Молоко банановое</div>
  <div class="t" style="left:972px;top:687.5px;font-size:12.5px;color:#1f2d4e;width:100px;text-align:right">0</div>
  <div class="t" style="left:1167px;top:687.5px;font-size:12.5px;color:#1f2d4e;width:100px;text-align:right">4</div>
  <div class="t" style="left:1360px;top:687.5px;font-size:12.5px;color:#1f2d4e;width:100px;text-align:right">0</div>
  <div class="abs" style="left:242px;top:725px;width:39px;height:22px;border-radius:11px;background:#4bcd88"></div>
  <div class="abs" style="left:261px;top:727.5px;width:17px;height:17px;border-radius:50%;background:#fff"></div>
  <svg class="abs" style="left:314px;top:730px" width="11" height="12" viewBox="0 0 11 12"><g fill="none" stroke="#c5ccd8" stroke-width="1.6"><path d="M3 11 V2.5"/><path d="M0.8 4.5 L3 2 L5.2 4.5"/><path d="M3 10.5 H10.5"/></g></svg>
  <div class="t" style="left:336.5px;top:728px;font-size:13.5px">Молоко овсяное</div>
  <div class="t" style="left:972px;top:728.5px;font-size:12.5px;color:#1f2d4e;width:100px;text-align:right">0</div>
  <div class="t" style="left:1167px;top:728.5px;font-size:12.5px;color:#1f2d4e;width:100px;text-align:right">4</div>
  <div class="t" style="left:1360px;top:728.5px;font-size:12.5px;color:#1f2d4e;width:100px;text-align:right">0</div>
  <div class="abs" style="left:242px;top:765.5px;width:39px;height:22px;border-radius:11px;background:#4bcd88"></div>
  <div class="abs" style="left:261px;top:768.0px;width:17px;height:17px;border-radius:50%;background:#fff"></div>
  <svg class="abs" style="left:314px;top:770.5px" width="11" height="12" viewBox="0 0 11 12"><g fill="none" stroke="#c5ccd8" stroke-width="1.6"><path d="M3 11 V2.5"/><path d="M0.8 4.5 L3 2 L5.2 4.5"/><path d="M3 10.5 H10.5"/></g></svg>
  <div class="t" style="left:336.5px;top:768.5px;font-size:13.5px">Молоко рисовое</div>
  <div class="t" style="left:972px;top:769.0px;font-size:12.5px;color:#1f2d4e;width:100px;text-align:right">0</div>
  <div class="t" style="left:1167px;top:769.0px;font-size:12.5px;color:#1f2d4e;width:100px;text-align:right">4</div>
  <div class="t" style="left:1360px;top:769.0px;font-size:12.5px;color:#1f2d4e;width:100px;text-align:right">0</div>
  <div class="abs" style="left:609px;top:241px;width:159px;height:79px;border-radius:22px;background:#fff;box-shadow:2px 5px 7px rgba(0,0,0,0.2)"></div>
  <div class="abs" style="left:613px;top:246px;width:150px;height:69px;border-radius:18px;background:#f3f4f8;overflow:hidden"><div class="hl" style="left:0;top:63px;width:150px"></div></div>
  <div class="t" style="left:624.5px;top:268px;font-size:17.6px;line-height:20px;letter-spacing:0.15px;-webkit-text-stroke-width:0.8px;color:#1456d6">Модификаторы</div>
  <div class="abs" style="left:624.5px;top:308px;width:129.5px;height:2px;background:#1a5fd6"></div>
  <!-- FOOTER -->
  <!-- Блюда popout -->
  <div class="abs" style="left:12px;top:235px;width:260px;height:46px;border-radius:23px;background:#fff;box-shadow:2px 3px 6px rgba(0,0,0,0.18)"></div>
  <div class="abs" style="left:17px;top:240px;width:250px;height:36px;border-radius:18px;background:#e5e8ef"></div>
  <div class="t m" style="left:80px;top:249px;font-size:14px;line-height:17px">Блюда</div>
</div>
</body></html>
